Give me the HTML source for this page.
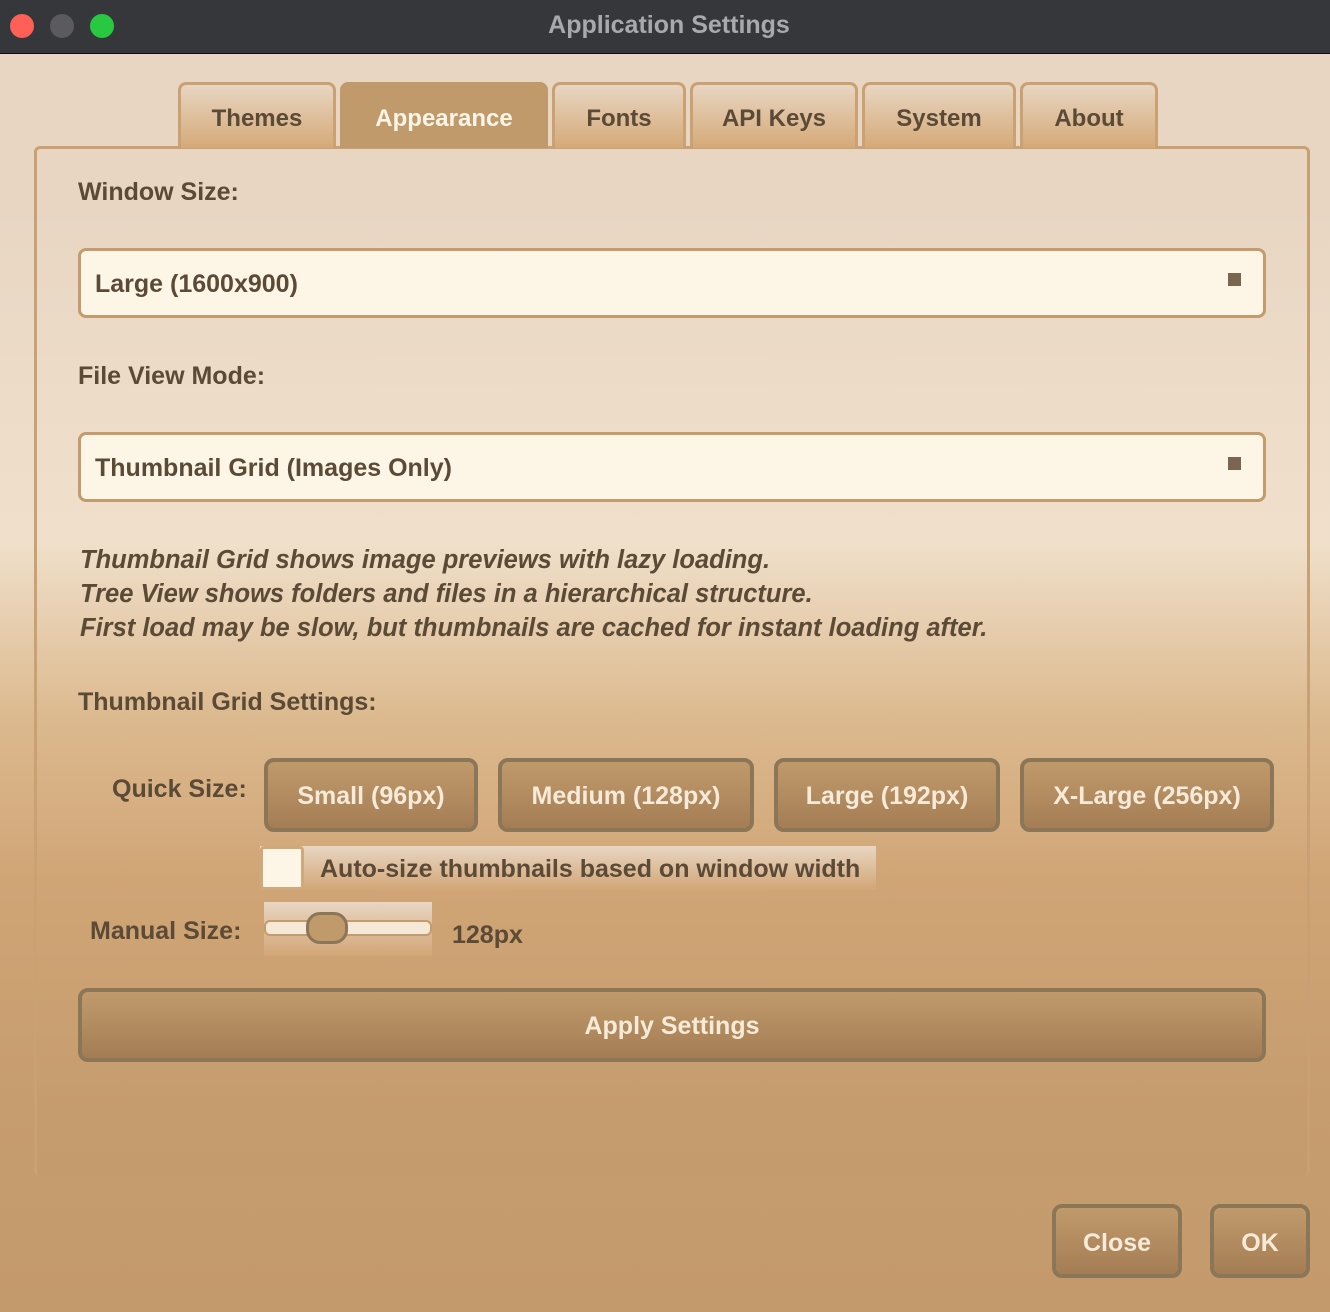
<!DOCTYPE html>
<html><head><style>
*{margin:0;padding:0;box-sizing:border-box}
body{width:1330px;height:1312px;overflow:hidden;font-family:"Liberation Sans",sans-serif;font-weight:bold;color:#5a4a36;
background:linear-gradient(to bottom,#e8d6c3 55px,#e8d6c3 200px,#f0e0cb 540px,#dcb98e 720px,#d0a576 880px,#c69d6f 1100px,#c39a6c 1312px);position:relative}
.title{position:absolute;left:0;top:0;width:1330px;height:54px;background:#36373b;border-bottom:1px solid #111}
.title .t{position:absolute;left:8px;right:0;top:11px;text-align:center;color:#a9a9ad;font-size:25px;letter-spacing:0}
.dot{position:absolute;top:14px;width:24px;height:24px;border-radius:50%}
.tab{position:absolute;top:82px;height:66px;border:3px solid #c9a172;border-bottom:none;border-radius:8px 8px 0 0;background:linear-gradient(#e8d6c3,#d5a977);text-align:center;font-size:24px;line-height:68px;color:#5a4a36}
.tab.sel{background:#c09a6b;color:#fdf5e6;border-color:#c09a6b}
.panel{position:absolute;left:34px;top:146px;width:1276px;height:1030px;border:3px solid #c9a172;border-radius:6px;border-bottom:none;border-right-color:#c7a074;background:linear-gradient(rgba(255,255,255,0) 900px,rgba(190,150,105,0.15))}
.lbl{position:absolute;font-size:25px;color:#5a4a36}
.combo{position:absolute;left:78px;width:1188px;height:70px;background:#fdf6e6;border:3px solid #c39b6c;border-radius:8px;font-size:25px;line-height:66px;padding-left:14px;color:#5a4a36}
.combo:after{content:"";position:absolute;right:22px;top:22px;width:13px;height:13px;background:#7a6650}
.it{position:absolute;left:80px;top:543px;font-style:italic;font-weight:bold;font-size:25.5px;line-height:34px;color:#5a4a36;letter-spacing:0}
.btn{position:absolute;border:4px solid #8c7658;border-radius:10px;background:linear-gradient(#c09a6b,#a57d55);color:#f6ead8;font-size:25px;text-align:center}
</style></head><body>
<div class="title"><div class="dot" style="left:10px;background:#fe5f57"></div><div class="dot" style="left:50px;background:#5a5a5f"></div><div class="dot" style="left:90px;background:#28c840"></div><div class="t">Application Settings</div></div>
<div class="panel"></div>
<div class="tab" style="left:178px;width:158px">Themes</div>
<div class="tab sel" style="left:340px;width:208px">Appearance</div>
<div class="tab" style="left:552px;width:134px">Fonts</div>
<div class="tab" style="left:690px;width:168px">API Keys</div>
<div class="tab" style="left:862px;width:154px">System</div>
<div class="tab" style="left:1020px;width:138px">About</div>
<div class="lbl" style="left:78px;top:178px">Window Size:</div>
<div class="combo" style="top:248px">Large (1600x900)</div>
<div class="lbl" style="left:78px;top:362px">File View Mode:</div>
<div class="combo" style="top:432px">Thumbnail Grid (Images Only)</div>
<div class="it">Thumbnail Grid shows image previews with lazy loading.<br>Tree View shows folders and files in a hierarchical structure.<br>First load may be slow, but thumbnails are cached for instant loading after.</div>
<div class="lbl" style="left:78px;top:688px">Thumbnail Grid Settings:</div>
<div class="lbl" style="left:112px;top:775px">Quick Size:</div>
<div class="btn" style="left:264px;top:758px;width:214px;height:74px;line-height:68px">Small (96px)</div>
<div class="btn" style="left:498px;top:758px;width:256px;height:74px;line-height:68px">Medium (128px)</div>
<div class="btn" style="left:774px;top:758px;width:226px;height:74px;line-height:68px">Large (192px)</div>
<div class="btn" style="left:1020px;top:758px;width:254px;height:74px;line-height:68px">X-Large (256px)</div>
<div style="position:absolute;left:260px;top:846px;width:616px;height:44px;background:linear-gradient(#e8d6c3,#d2a677)"></div>
<div style="position:absolute;left:260px;top:846px;width:44px;height:44px;border:3px solid #d0a97a;border-radius:4px;background:#fdf6e6"></div>
<div class="lbl" style="left:320px;top:855px">Auto-size thumbnails based on window width</div>
<div class="lbl" style="left:90px;top:917px">Manual Size:</div>
<div style="position:absolute;left:264px;top:902px;width:168px;height:54px;background:linear-gradient(#e8d6c3,#d2a677)"></div>
<div style="position:absolute;left:264px;top:920px;width:168px;height:16px;border:2px solid #c39b6c;border-radius:6px;background:#f6e8d6"></div>
<div style="position:absolute;left:306px;top:912px;width:42px;height:32px;border:3px solid #8c7658;border-radius:14px;background:#c09a6b"></div>
<div class="lbl" style="left:452px;top:921px">128px</div>
<div class="btn" style="left:78px;top:988px;width:1188px;height:74px;line-height:68px">Apply Settings</div>
<div class="btn" style="left:1052px;top:1204px;width:130px;height:74px;line-height:70px">Close</div>
<div class="btn" style="left:1210px;top:1204px;width:100px;height:74px;line-height:70px">OK</div>
</body></html>
